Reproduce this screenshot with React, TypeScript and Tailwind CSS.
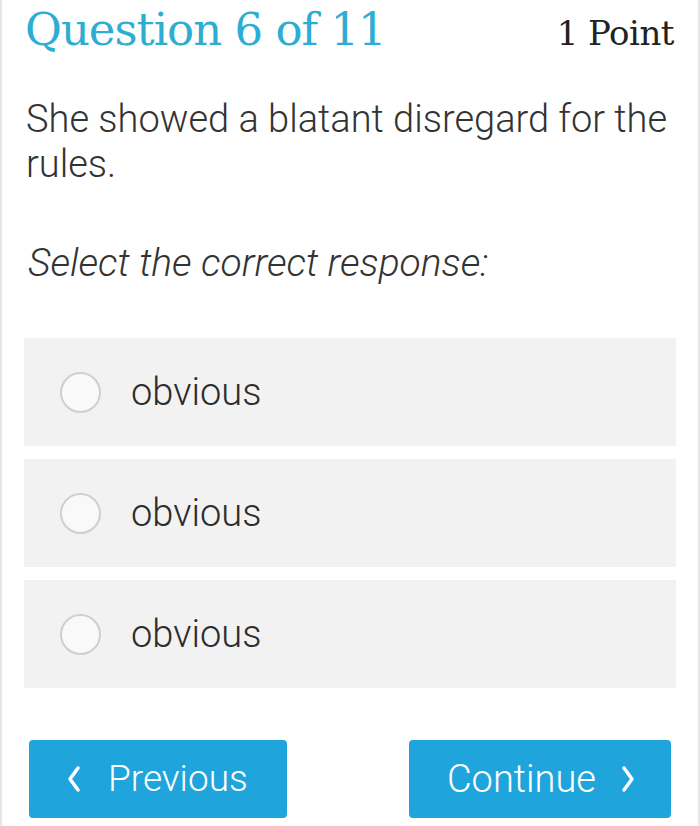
import React from 'react';

const options = ['obvious', 'obvious', 'obvious'];

const ChevronLeft = () => (
  <svg width="16" height="28" viewBox="0 0 16 28" fill="none" stroke="white" strokeWidth="3.5" strokeLinecap="round" strokeLinejoin="round">
    <path d="M12 3 L4 14 L12 25" />
  </svg>
);

const ChevronRight = () => (
  <svg width="16" height="28" viewBox="0 0 16 28" fill="none" stroke="white" strokeWidth="3.5" strokeLinecap="round" strokeLinejoin="round">
    <path d="M4 3 L12 14 L4 25" />
  </svg>
);

export default function App() {
  return (
    <div className="w-[700px] h-[826px] bg-white border-x-2 border-[#e6e6e6] overflow-hidden font-['Roboto',sans-serif] text-[#2a2a2a]">
      {/* Header */}
      <div className="flex items-baseline justify-between pl-[23px] pr-[24px] pt-[0px]">
        <h1 className="font-['DejaVu_Serif',serif] font-light text-[45px] leading-[60px] text-[#2eadd2] tracking-[-1px]">
          Question 6 of 11
        </h1>
        <span className="font-['DejaVu_Serif',serif] text-[34px] text-[#222] tracking-[-0.5px]">1 Point</span>
      </div>

      {/* Question */}
      <p className="pl-[24px] pr-[20px] mt-[37px] text-[38px] leading-[45px] font-light text-[#333]">
        She showed a blatant disregard for the rules.
      </p>

      <p className="pl-[26px] mt-[53px] text-[39px] leading-[46px] font-light italic text-[#333]">
        Select the correct response:
      </p>

      {/* Options */}
      <div className="flex flex-col gap-[13px] px-[22px] mt-[52px]">
        {options.map((o, i) => (
          <div key={i} className="h-[108px] bg-[#f2f2f2] flex items-center pl-[36px]">
            <div className="w-[41px] h-[41px] rounded-full border-2 border-[#cfcfcf] bg-[#f9f9f9]" />
            <span className="ml-[30px] text-[38px] font-light text-[#2c2c2c]">{o}</span>
          </div>
        ))}
      </div>

      {/* Buttons */}
      <div className="flex justify-between pl-[27px] pr-[27px] mt-[52px]">
        <button className="w-[258px] h-[78px] bg-[#1fa5dc] rounded-[4px] flex items-center pl-[37px] gap-[26px] text-white text-[37px] font-light">
          <ChevronLeft />
          <span>Previous</span>
        </button>
        <button className="w-[262px] h-[78px] bg-[#1fa5dc] rounded-[4px] flex items-center justify-end pr-[35px] gap-[24px] text-white text-[38px] font-light">
          <span>Continue</span>
          <ChevronRight />
        </button>
      </div>
    </div>
  );
}
